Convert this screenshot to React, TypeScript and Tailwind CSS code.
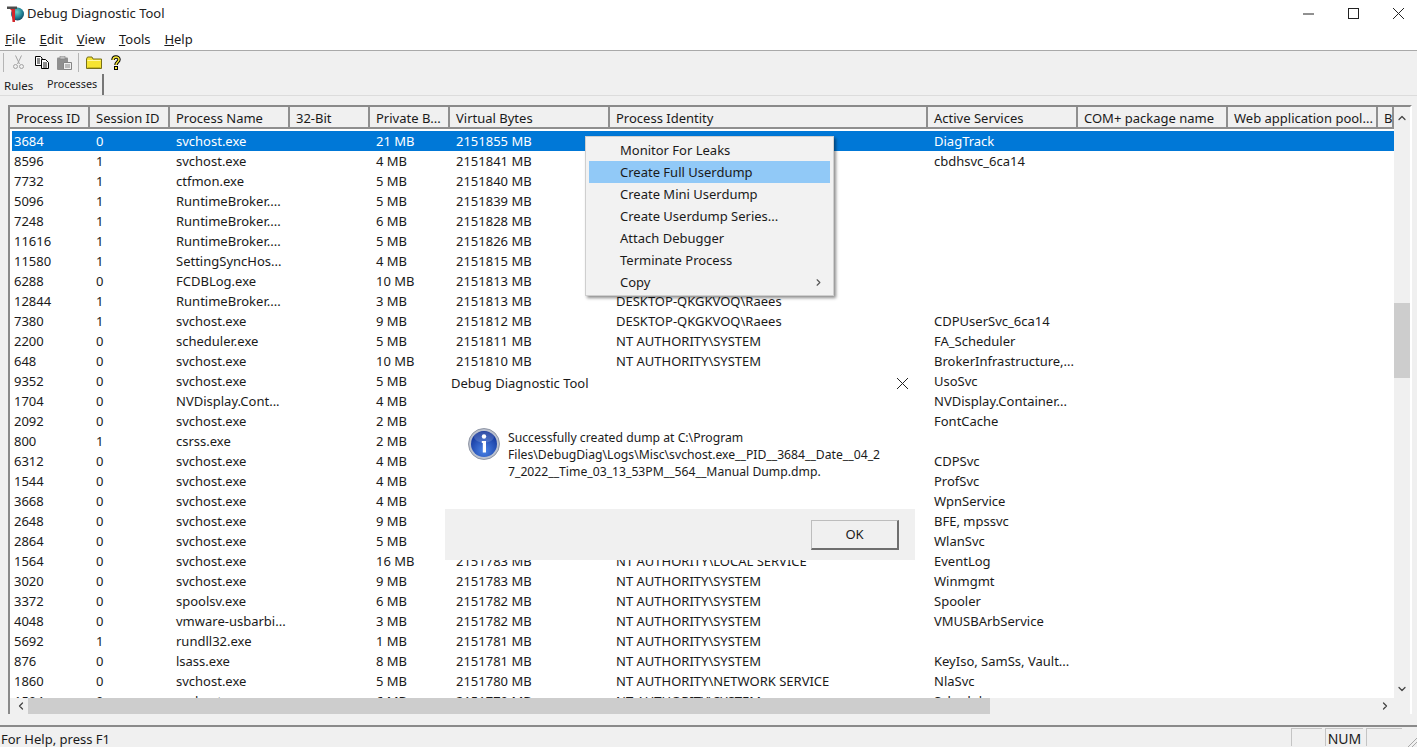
import { ChevronLeft, ChevronRight, ChevronUp, ChevronDown } from "lucide-react"

const font = "font-['Noto_Sans','Liberation_Sans',sans-serif]"

const columns = [
  { label: "Process ID", width: "w-[80px]" },
  { label: "Session ID", width: "w-[80px]" },
  { label: "Process Name", width: "w-[120px]" },
  { label: "32-Bit", width: "w-[80px]" },
  { label: "Private B...", width: "w-[80px]" },
  { label: "Virtual Bytes", width: "w-[160px]" },
  { label: "Process Identity", width: "w-[318px]" },
  { label: "Active Services", width: "w-[150px]" },
  { label: "COM+ package name", width: "w-[150px]" },
  { label: "Web application pool...", width: "w-[150px]" },
  { label: "B", width: "w-[16px]" },
]

const DESK = "DESKTOP-QKGKVOQ\\Raees"
const SYS = "NT AUTHORITY\\SYSTEM"

// rows under the menu and the message box have no visible bytes/identity
const rows = [
  ["3684", "0", "svchost.exe", "21 MB", "2151855 MB", "", "DiagTrack"],
  ["8596", "1", "svchost.exe", "4 MB", "2151841 MB", "", "cbdhsvc_6ca14"],
  ["7732", "1", "ctfmon.exe", "5 MB", "2151840 MB", "", ""],
  ["5096", "1", "RuntimeBroker....", "5 MB", "2151839 MB", "", ""],
  ["7248", "1", "RuntimeBroker....", "6 MB", "2151828 MB", "", ""],
  ["11616", "1", "RuntimeBroker....", "5 MB", "2151826 MB", "", ""],
  ["11580", "1", "SettingSyncHos...", "4 MB", "2151815 MB", "", ""],
  ["6288", "0", "FCDBLog.exe", "10 MB", "2151813 MB", "", ""],
  ["12844", "1", "RuntimeBroker....", "3 MB", "2151813 MB", DESK, ""],
  ["7380", "1", "svchost.exe", "9 MB", "2151812 MB", DESK, "CDPUserSvc_6ca14"],
  ["2200", "0", "scheduler.exe", "5 MB", "2151811 MB", SYS, "FA_Scheduler"],
  ["648", "0", "svchost.exe", "10 MB", "2151810 MB", SYS, "BrokerInfrastructure,..."],
  ["9352", "0", "svchost.exe", "5 MB", "", "", "UsoSvc"],
  ["1704", "0", "NVDisplay.Cont...", "4 MB", "", "", "NVDisplay.Container..."],
  ["2092", "0", "svchost.exe", "2 MB", "", "", "FontCache"],
  ["800", "1", "csrss.exe", "2 MB", "", "", ""],
  ["6312", "0", "svchost.exe", "4 MB", "", "", "CDPSvc"],
  ["1544", "0", "svchost.exe", "4 MB", "", "", "ProfSvc"],
  ["3668", "0", "svchost.exe", "4 MB", "", "", "WpnService"],
  ["2648", "0", "svchost.exe", "9 MB", "", "", "BFE, mpssvc"],
  ["2864", "0", "svchost.exe", "5 MB", "", "", "WlanSvc"],
  ["1564", "0", "svchost.exe", "16 MB", "2151783 MB", "NT AUTHORITY\\LOCAL SERVICE", "EventLog"],
  ["3020", "0", "svchost.exe", "9 MB", "2151783 MB", SYS, "Winmgmt"],
  ["3372", "0", "spoolsv.exe", "6 MB", "2151782 MB", SYS, "Spooler"],
  ["4048", "0", "vmware-usbarbi...", "3 MB", "2151782 MB", SYS, "VMUSBArbService"],
  ["5692", "1", "rundll32.exe", "1 MB", "2151781 MB", SYS, ""],
  ["876", "0", "lsass.exe", "8 MB", "2151781 MB", SYS, "KeyIso, SamSs, Vault..."],
  ["1860", "0", "svchost.exe", "5 MB", "2151780 MB", "NT AUTHORITY\\NETWORK SERVICE", "NlaSvc"],
  ["1504", "0", "svchost.exe", "6 MB", "2151779 MB", SYS, "Schedule"],
]

const menuItems = [
  "Monitor For Leaks",
  "Create Full Userdump",
  "Create Mini Userdump",
  "Create Userdump Series...",
  "Attach Debugger",
  "Terminate Process",
  "Copy",
]

function AppIcon() {
  return (
    <svg width="18" height="18" viewBox="0 0 18 18">
      <defs>
        <radialGradient id="globe" cx="45%" cy="35%" r="70%">
          <stop offset="0%" stopColor="#6fd0c8" />
          <stop offset="60%" stopColor="#1f7f95" />
          <stop offset="100%" stopColor="#123a55" />
        </radialGradient>
      </defs>
      <circle cx="11.5" cy="9" r="6.5" fill="url(#globe)" />
      <path d="M4 4h5v13H6.500L5.500 5.500z" fill="#d3262b" />
      <path d="M1 1.500h10v2.500H1z" fill="#4c4c4c" />
    </svg>
  )
}

function ToolIcons() {
  return (
    <div className="flex items-center pl-[3px]">
      <div className="w-px h-[19px] bg-[#b5b5b5]" />
      <svg width="11" height="15" viewBox="0 0 11 15" fill="none" stroke="#a3a3a3" className="ml-[9px]">
        <path d="M2.500 0.500l4 8.500M8.500 0.500l-4 8.500" />
        <circle cx="2.500" cy="11.500" r="2" />
        <circle cx="8.500" cy="11.500" r="2" />
      </svg>
      <svg width="14" height="13" viewBox="0 0 14 13" fill="#fff" stroke="#000" className="ml-[11px]">
        <path d="M0.500 0.500h5l1.500 1.500v7.500H0.500z" />
        <path d="M6.500 3.500h4l3 3v6h-7z" />
        <path d="M2 3h3M2 5h3M2 7h3M8 7h4M8 9h4M8 11h4" strokeWidth="0.900" />
      </svg>
      <svg width="15" height="14" viewBox="0 0 15 14" className="ml-[8px]">
        <rect x="0" y="1.500" width="11" height="12.500" rx="1" fill="#8f8f8f" />
        <rect x="3" y="0" width="5" height="3" fill="#c4c4c4" stroke="#858585" strokeWidth="0.600" />
        <path d="M6.500 6.500h8v7h-8z" fill="#efefef" stroke="#858585" />
        <path d="M8 9h5M8 11h5" stroke="#858585" />
      </svg>
      <div className="w-px h-[19px] bg-[#b5b5b5] ml-[6px]" />
      <svg width="16" height="13" viewBox="0 0 16 13" className="ml-[7px]">
        <path d="M0.500 3l1-2h4.500l1 2h8.500v9.500h-15z" fill="#f6e432" stroke="#77701a" />
        <path d="M1.500 4.500h13" stroke="#fff7a6" />
        <path d="M1.500 11.500h13" stroke="#c9b91f" />
      </svg>
      <svg width="10" height="15" viewBox="0 0 10 15" fill="none" className="ml-[9px]">
        <path d="M2 5C2 1 8 1 8 4.500c0 2.500-3 2.500-3 5.500" stroke="#000" strokeWidth="3.400" />
        <path d="M2 5C2 1 8 1 8 4.500c0 2.500-3 2.500-3 5.500" stroke="#f7e93a" strokeWidth="1.500" />
        <rect x="3.500" y="11.500" width="3" height="3" fill="#f7e93a" stroke="#000" />
      </svg>
    </div>
  )
}

function InfoIcon() {
  return (
    <svg width="32" height="32" viewBox="0 0 32 32" className="-mt-px">
      <defs>
        <radialGradient id="ball" cx="50%" cy="75%" r="70%">
          <stop offset="0%" stopColor="#4a84e8" />
          <stop offset="100%" stopColor="#12349a" />
        </radialGradient>
      </defs>
      <circle cx="16" cy="16" r="15.500" fill="#bcc2cf" stroke="#7f8797" strokeWidth="0.800" />
      <circle cx="16" cy="16" r="13" fill="url(#ball)" />
      <ellipse cx="16" cy="9" rx="10" ry="5.500" fill="#fff" opacity="0.150" />
      <circle cx="16" cy="8.500" r="2.200" fill="#fff" />
      <path d="M13.800 13h4.200v11.500h-3.200V15h-1z" fill="#fff" />
    </svg>
  )
}

export default function App() {
  return (
    <div className={`h-[747px] w-[1417px] overflow-hidden relative flex flex-col bg-[#f0f0f0] text-[#1a1a1a] text-[13px] ${font}`}>
      {/* title bar */}
      <div className="h-[27px] bg-white flex items-center pl-[6px] shrink-0">
        <AppIcon />
        <span className="ml-[3px] text-[#222]">Debug Diagnostic Tool</span>
        <div className="ml-auto flex items-center gap-[34px] pr-[13px]">
          <svg width="11" height="11" viewBox="0 0 11 11" stroke="#222" fill="none"><path d="M0 6h11" /></svg>
          <svg width="11" height="11" viewBox="0 0 11 11" stroke="#222" fill="none"><rect x="0.500" y="0.500" width="10" height="10" /></svg>
          <svg width="11" height="11" viewBox="0 0 11 11" stroke="#222" fill="none"><path d="M0 0l11 11M11 0L0 11" /></svg>
        </div>
      </div>

      {/* menu bar */}
      <div className="h-[21px] bg-white flex items-center gap-[13.800px] pl-[5px] pt-[2px] shrink-0 border-b border-[#a9a9a9] box-content">
        <span><u>F</u>ile</span>
        <span><u>E</u>dit</span>
        <span><u>V</u>iew</span>
        <span><u>T</u>ools</span>
        <span><u>H</u>elp</span>
      </div>

      {/* toolbar */}
      <div className="h-[23px] flex items-center shrink-0">
        <ToolIcons />
      </div>

      {/* tabs */}
      <div className="h-[21px] flex items-end pl-[4px] shrink-0 border-b border-[#dcdcdc] box-content">
        <span className="text-[11.5px] h-[18px] leading-[17px] w-[42px]">Rules</span>
        <span className="text-[10.8px] h-[21px] leading-[19px] pl-[1px] w-[58px] border-r-2 border-[#777] whitespace-nowrap">Processes</span>
      </div>

      {/* process list */}
      <div className="mt-[9px] ml-[8px] w-[1404px] h-[609px] shrink-0 border-l-2 border-t-2 border-r-2 border-r-white border-[#8a8a8a] bg-white relative overflow-hidden">
        <div className="flex h-[22px] bg-[#f0f0f0] whitespace-nowrap">
          {columns.map((c) => (
            <div key={c.label} className={`${c.width} shrink-0 pl-[6px] leading-[22px] border-r-2 border-b-2 border-[#8f8f8f] overflow-hidden`}>
              {c.label}
            </div>
          ))}
        </div>
        <div className="mt-[2px] ml-[2px]">
          {rows.map((r, i) => (
            <div key={r[0]} className={`flex h-[20px] w-[1382px] leading-[20px] whitespace-nowrap ${i === 0 ? "bg-[#0078d7] text-white" : ""}`}>
              <div className="w-[78px] pl-[2px] shrink-0">{r[0]}</div>
              <div className="w-[80px] pl-[6px] shrink-0">{r[1]}</div>
              <div className="w-[120px] pl-[6px] shrink-0">{r[2]}</div>
              <div className="w-[80px] shrink-0" />
              <div className="w-[80px] pl-[6px] shrink-0">{r[3]}</div>
              <div className="w-[160px] pl-[6px] shrink-0">{r[4]}</div>
              <div className="w-[318px] pl-[6px] shrink-0">{r[5]}</div>
              <div className="w-[150px] pl-[6px] shrink-0">{r[6]}</div>
            </div>
          ))}
        </div>

        {/* vertical scrollbar */}
        <div className="absolute right-0 top-0 bottom-0 w-[16px] bg-[#f0f0f0] flex flex-col items-center">
          <ChevronUp size={12} strokeWidth={2.5} className="mt-[5px] text-[#444]" />
          <div className="absolute top-[196px] h-[75px] w-full bg-[#cdcdcd]" />
          <ChevronDown size={12} strokeWidth={2.5} className="absolute bottom-[19px] text-[#444]" />
        </div>

        {/* horizontal scrollbar */}
        <div className="absolute left-0 right-0 bottom-0 h-[16px] bg-[#f0f0f0] flex items-center">
          <ChevronLeft size={12} strokeWidth={2.5} className="ml-[5px] text-[#444]" />
          <div className="ml-px h-full w-[962px] bg-[#cdcdcd]" />
          <ChevronRight size={12} strokeWidth={2.5} className="absolute right-[19px] text-[#444]" />
        </div>
      </div>

      {/* status bar */}
      <div className="mt-[11px] flex-1 border-t-2 border-[#8a8a8a] flex items-center whitespace-nowrap relative">
        <span className="pl-px mt-[3px] leading-[16px]">For Help, press F1</span>
        <div className="ml-auto flex self-start h-[18px] mt-px mr-[15px] gap-[3px]">
          <div className="w-[31px] border-t border-l border-[#c4c4c4]" />
          <div className="w-[38px] border-t border-l border-[#c4c4c4] text-center text-[14px] leading-[20px]">NUM</div>
          <div className="w-[36px] border-t border-l border-[#c4c4c4]" />
        </div>
        <svg width="11" height="11" viewBox="0 0 11 11" stroke="#a8a8a8" fill="none" className="absolute right-0 bottom-0">
          <path d="M11 2L2 11M11 6l-5 5" />
        </svg>
      </div>

      {/* context menu */}
      <div className="absolute left-[585px] top-[136px] w-[249px] h-[160px] bg-[#f2f2f2] border border-[#cfcfcf] shadow-[2px_2px_3px_rgba(0,0,0,0.45)] py-[2px] px-[3px]">
        {menuItems.map((m, i) => (
          <div key={m} className={`h-[22px] leading-[21px] pl-[31px] flex items-center justify-between pr-[6px] ${i === 1 ? "bg-[#91c9f7]" : ""}`}>
            {m}
            {m === "Copy" && <ChevronRight size={11} strokeWidth={2.500} className="text-[#555]" />}
          </div>
        ))}
      </div>

      {/* message box */}
      <div className="absolute left-[445px] top-[369px] w-[470px] h-[191px] bg-white flex flex-col">
        <div className="h-[28px] flex items-center pl-[6px] pr-[8px] justify-between">
          <span className="mt-[2px]">Debug Diagnostic Tool</span>
          <svg width="11" height="11" viewBox="0 0 11 11" stroke="#222" fill="none" className="-mr-px"><path d="M0 0l11 11M11 0L0 11" /></svg>
        </div>
        <div className="flex-1 flex pl-[23px] pt-[32px]">
          <InfoIcon />
          <p className="ml-[8px] text-[12.200px] leading-[17px] w-[400px] whitespace-nowrap">
            Successfully created dump at C:\Program<br />
            Files\DebugDiag\Logs\Misc\svchost.exe__PID__3684__Date__04_2<br />
            7_2022__Time_03_13_53PM__564__Manual Dump.dmp.
          </p>
        </div>
        <div className="h-[51px] bg-[#f0f0f0] flex items-center justify-end pr-[16px]">
          <div className="w-[88px] h-[30px] border border-[#bdbdbd] border-r-2 border-b-2 border-r-[#6e6e6e] border-b-[#6e6e6e] text-center leading-[27px]">OK</div>
        </div>
      </div>
    </div>
  )
}
